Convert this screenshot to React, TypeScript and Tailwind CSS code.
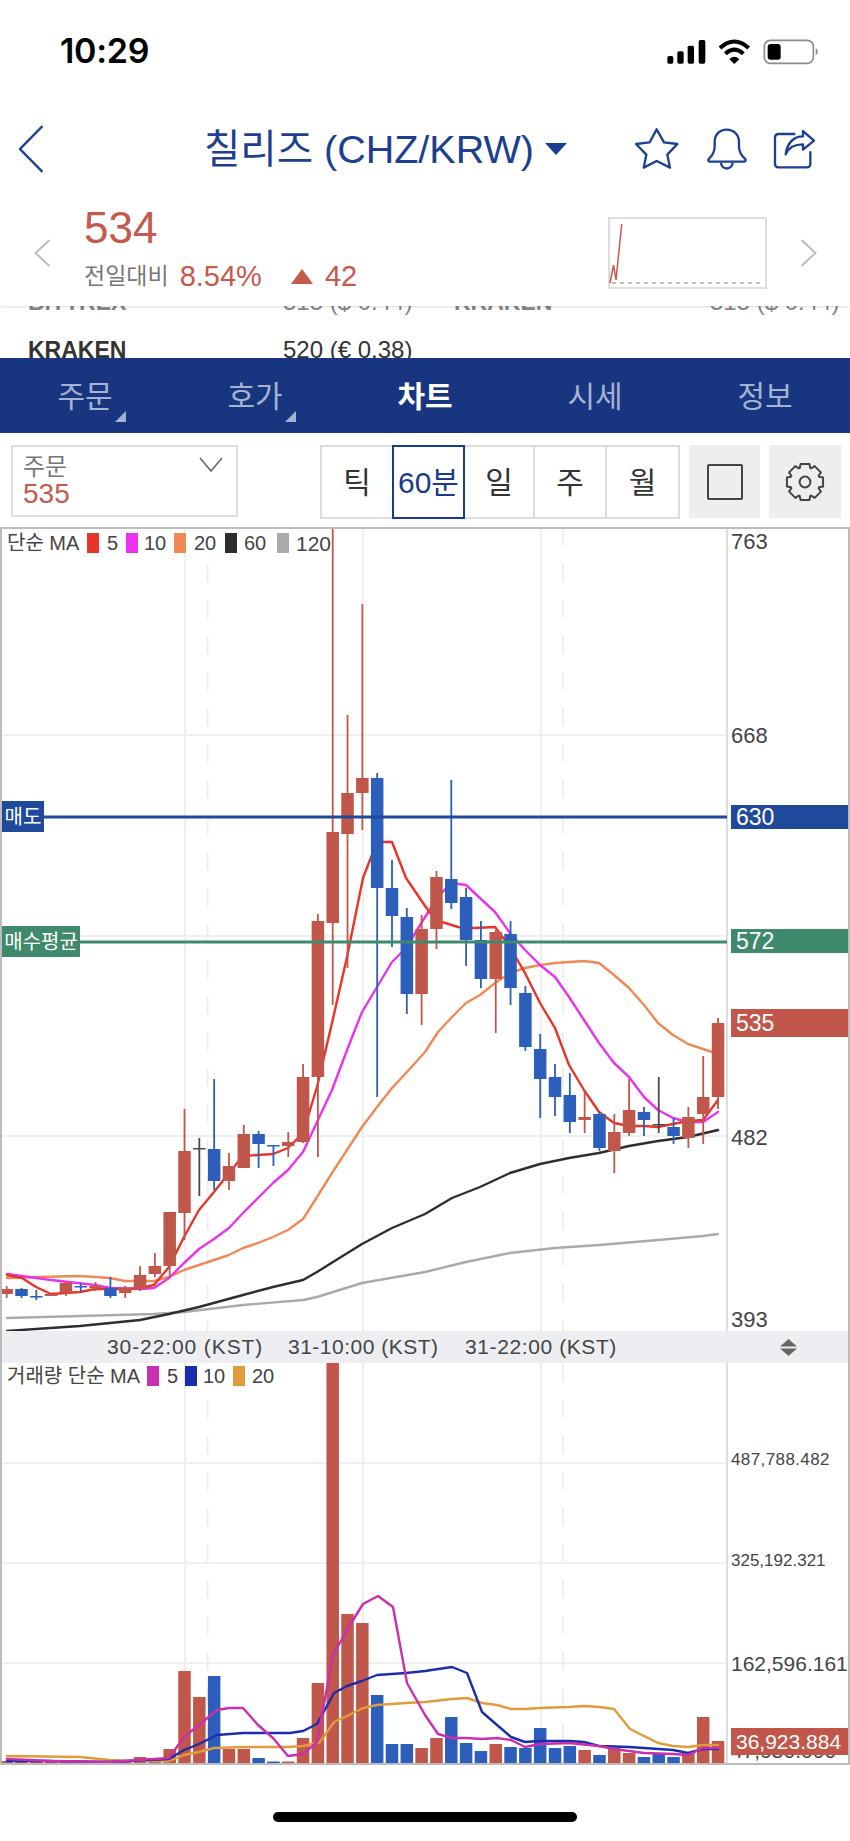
const FONT = "[font-family:'Liberation_Sans','Noto_Sans_CJK_KR',sans-serif]";

const RED = "#c1574a";
const BLUE = "#2c5fbb";
const DARK = "#4a4a4a";
const GRID = "#efefef";

const xAt = (i: number) => 6.67 + 14.82 * i;

// color, wick top, wick bottom, body top, body bottom
const candles: [string, number, number, number, number][] = [
  [RED, 1286, 1298, 1289, 1294],
  [BLUE, 1288, 1298, 1289, 1296],
  [BLUE, 1290, 1300, 1296, 1297.5],
  [RED, 1294, 1296, 1294, 1296],
  [RED, 1282, 1296, 1283, 1293],
  [BLUE, 1283, 1292, 1286, 1287.5],
  [RED, 1282, 1291, 1286, 1288],
  [BLUE, 1277, 1298, 1288, 1296],
  [RED, 1286, 1298, 1288, 1293],
  [RED, 1266, 1291, 1275, 1289],
  [RED, 1253, 1277, 1266, 1274],
  [RED, 1212, 1277, 1212, 1266],
  [RED, 1109, 1240, 1151, 1213],
  [DARK, 1138, 1196, 1148, 1149.5],
  [BLUE, 1079, 1190, 1149, 1181],
  [RED, 1153, 1190, 1166, 1181],
  [RED, 1125, 1168, 1134, 1168],
  [BLUE, 1131, 1168, 1134, 1144],
  [BLUE, 1145, 1166, 1145, 1146.5],
  [RED, 1132, 1157, 1142, 1146],
  [RED, 1064, 1143, 1077, 1142],
  [RED, 914, 1157, 921, 1077],
  [RED, 529, 1005, 832, 923],
  [RED, 715, 968, 793, 834],
  [RED, 604, 830, 778, 793],
  [BLUE, 773, 1097, 778, 888],
  [BLUE, 860, 947, 888, 916],
  [BLUE, 908, 1014, 917, 994],
  [RED, 915, 1025, 929, 994],
  [RED, 871, 949, 877, 929],
  [BLUE, 780, 909, 879, 903],
  [BLUE, 888, 966, 897, 940],
  [BLUE, 921, 988, 940, 979],
  [RED, 930, 1033, 932, 979],
  [BLUE, 921, 1005, 934, 988],
  [BLUE, 986, 1051, 993, 1047],
  [BLUE, 1034, 1118, 1049, 1079],
  [BLUE, 1064, 1116, 1077, 1097],
  [BLUE, 1073, 1133, 1095, 1122],
  [RED, 1090, 1133, 1117, 1120],
  [BLUE, 1112, 1151, 1114, 1148],
  [RED, 1114, 1173, 1132, 1151],
  [RED, 1079, 1136, 1110, 1133],
  [BLUE, 1107, 1136, 1112, 1120],
  [DARK, 1077, 1133, 1124, 1125.5],
  [BLUE, 1118, 1144, 1127, 1136],
  [RED, 1107, 1148, 1117, 1138],
  [RED, 1056, 1144, 1097, 1114],
  [RED, 1018, 1109, 1023, 1097],
];

const volumes: [string, number][] = [
  [RED, 1761], [RED, 1762], [RED, 1762], [RED, 1762], [RED, 1762], [RED, 1762], [RED, 1762], [BLUE, 1762], [RED, 1762],
  [RED, 1757], [RED, 1758], [RED, 1749], [RED, 1671], [RED, 1697], [BLUE, 1676], [RED, 1749], [RED, 1749], [BLUE, 1758],
  [BLUE, 1761.5], [RED, 1761.5], [RED, 1738], [RED, 1683], [RED, 1363], [RED, 1614], [RED, 1623], [BLUE, 1695], [BLUE, 1744],
  [BLUE, 1744], [RED, 1748], [RED, 1738], [BLUE, 1717], [BLUE, 1743], [BLUE, 1751], [RED, 1744], [BLUE, 1747], [BLUE, 1748],
  [BLUE, 1728], [BLUE, 1748], [BLUE, 1746], [RED, 1750], [BLUE, 1755], [RED, 1748], [RED, 1753], [BLUE, 1757], [BLUE, 1753],
  [BLUE, 1757], [RED, 1753], [RED, 1717], [RED, 1741],
];

const ma5 = "7,1275 22,1278 36,1287 51,1294 66,1293 80,1292 95,1289 110,1289 125,1289 140,1288 154,1285 169,1267 184,1237 199,1210 214,1192 229,1173 243,1156 258,1155 273,1154 288,1148 303,1133 317,1087 332,1023 347,957 363,878 377,842 392,842 406,878 423,903 430,913 442,922 458,927 475,928 495,927 510,947 525,973 540,1003 555,1028 569,1065 584,1090 599,1112 614,1123 629,1126 644,1126 658,1127 673,1124 688,1121 703,1120 718,1100";
const ma10 = "7,1274 51,1280 95,1285 110,1288 140,1289 154,1288 169,1278 184,1263 199,1249 214,1239 229,1228 243,1213 258,1198 273,1183 288,1170 303,1152 317,1122 332,1090 347,1050 362,1012 377,987 392,962 406,948 425,917 438,897 451,883 466,885 482,900 495,912 510,933 525,950 540,965 555,977 569,997 584,1020 599,1043 614,1063 629,1077 644,1097 658,1110 673,1118 688,1122 703,1122 718,1112";
const ma20 = "7,1278 36,1277 80,1276 110,1278 125,1281 140,1281 154,1281 169,1277 184,1270 199,1265 214,1260 229,1255 243,1248 258,1243 273,1237 288,1230 303,1219 317,1197 332,1173 347,1150 362,1127 377,1107 392,1088 406,1073 425,1052 438,1032 452,1017 466,1003 480,995 495,983 510,973 525,968 540,965 555,963 569,962 584,961 599,963 614,975 629,988 644,1005 658,1023 673,1035 688,1044 703,1049 712,1052";
const ma60 = "7,1331 80,1326 140,1320 169,1314 199,1307 243,1295 273,1287 303,1280 317,1272 333,1262 362,1244 392,1228 425,1214 452,1198 480,1187 510,1173 540,1164 569,1158 599,1153 629,1146 658,1141 688,1137 718,1130";
const ma120 = "7,1318 80,1316 154,1314 184,1312 243,1305 303,1300 317,1297 362,1283 425,1272 466,1262 510,1253 555,1248 599,1245 658,1240 703,1236 718,1234";

const vol5 = "7,1759 51,1761 110,1762 169,1758 184,1737 199,1725 217,1710 229,1708 243,1708 258,1725 273,1738 288,1756 303,1754 317,1742 333,1655 347,1630 363,1604 378,1596 393,1607 407,1683 425,1715 438,1734 452,1738 467,1738 482,1739 497,1738 511,1740 525,1747 540,1744 569,1743 599,1746 614,1749 644,1753 673,1754 688,1755 703,1748 718,1748";
const vol10 = "7,1761 51,1761 110,1762 169,1759 184,1750 199,1744 217,1735 243,1733 273,1733 290,1733 303,1731 317,1724 334,1693 347,1686 362,1681 377,1675 406,1673 425,1671 452,1667 467,1673 482,1712 497,1725 511,1737 525,1742 540,1741 569,1741 584,1742 599,1746 629,1747 644,1748 673,1750 688,1753 703,1749 718,1749";
const vol20 = "7,1756 80,1757 110,1760 140,1761 169,1761 184,1755 199,1752 214,1748 243,1747 288,1747 303,1746 320,1742 334,1722 347,1716 363,1708 377,1705 406,1703 425,1702 452,1699 467,1698 482,1703 497,1705 511,1709 525,1709 540,1708 569,1707 584,1706 599,1707 614,1709 630,1729 644,1736 658,1743 673,1746 688,1747 703,1745 718,1745";

const gearPath = () => {
  const pts: string[] = [];
  const cx = 20;
  const cy = 20;
  for (let t = 0; t < 8; t++) {
    const a = (t * Math.PI) / 4 - Math.PI / 2;
    [
      [15, -0.36],
      [18.6, -0.24],
      [18.6, 0.24],
      [15, 0.36],
    ].forEach(([r, d]) => {
      pts.push(`${(cx + r * Math.cos(a + d)).toFixed(2)},${(cy + r * Math.sin(a + d)).toFixed(2)}`);
    });
  }
  return `M${pts.join(" L")} Z`;
};

const Line = ({ points, color, width = 2.4 }: { points: string; color: string; width?: number }) => (
  <polyline points={points} fill="none" stroke={color} strokeWidth={width} strokeLinejoin="round" strokeLinecap="round" />
);

const StatusBar = () => (
  <div className="flex h-[104px] items-start justify-between pl-[60px] pr-[20px] pt-[30px]">
    <span className="mt-[1px] text-[34px] leading-[40px] font-semibold tracking-[-0.3px] text-black [font-family:Inter,sans-serif]">10:29</span>
    <svg viewBox="0 0 540 135" className="h-[45px] w-[180px]">
      <rect x="52" y="78" width="18" height="23" rx="5" fill="#000" />
      <rect x="82" y="64" width="19" height="37" rx="5" fill="#000" />
      <rect x="113" y="47" width="19" height="54" rx="5" fill="#000" />
      <rect x="146" y="30" width="20" height="71" rx="5" fill="#000" />
      <path d="M210 54 C238 28 268 28 296 54" fill="none" stroke="#000" strokeWidth="12" />
      <path d="M226 71 C244 55 262 55 280 71" fill="none" stroke="#000" strokeWidth="12" />
      <path d="M238 88 C248 78 258 78 268 88 L253 102 Z" fill="#000" />
      <rect x="343" y="31" width="147" height="69" rx="18" fill="none" stroke="#8c8c8c" strokeWidth="5" />
      <rect x="353" y="42" width="39" height="47" rx="9" fill="#000" />
      <path d="M497 55 C505 58 505 72 497 76 Z" fill="#8c8c8c" />
    </svg>
  </div>
);

const NavHeader = () => (
  <div className="flex h-[90px] items-center pl-[19px] text-[#1c3f92]">
    <svg viewBox="0 0 24 48" className="h-[48px] w-[24px]">
      <path d="M23.5 1 L1 24 L23.5 47" fill="none" stroke="currentColor" strokeWidth="2.4" />
    </svg>
    <span className="ml-[161px] mt-[2px] text-[39.5px] leading-none whitespace-nowrap">칠리즈 (CHZ/KRW)</span>
    <svg viewBox="0 0 22 12" className="ml-[11px] h-[12px] w-[22px]">
      <path d="M0 0 H22 L11 12 Z" fill="currentColor" />
    </svg>
    <svg viewBox="40 20 140 130" className="absolute left-[633px] top-[127px] h-[43.3px] w-[46.7px]" fill="none" stroke="currentColor" strokeWidth="7" strokeLinejoin="round">
      <path d="M111 27 L133 66 L173 71 L143 103 L151 142 L111 122 L72 142 L80 103 L49 71 L90 66 Z" />
    </svg>
    <svg viewBox="255 20 130 130" className="absolute left-[705px] top-[127px] h-[43.3px] w-[43.3px]" fill="none" stroke="currentColor" strokeWidth="7" strokeLinejoin="round">
      <path d="M268 124 H374 Q380 120 374 114 Q358 100 357 80 V65 C357 42 340 28 320 28 C300 28 284 42 284 65 V80 Q283 100 268 114 Q262 120 268 124 Z" />
      <path d="M303 127 A17 17 0 0 0 338 127" />
    </svg>
    <svg viewBox="455 25 135 125" className="absolute left-[772px] top-[128px] h-[41.7px] w-[45px]" fill="none" stroke="currentColor" strokeWidth="7" strokeLinejoin="round">
      <path d="M525 43 H475 Q464 43 464 54 V132 Q464 143 475 143 H559 Q570 143 570 132 V95" />
      <path d="M548 34 L581 63 L548 90 V74 C525 74 505 82 496 104 C500 70 520 50 548 50 Z" />
    </svg>
  </div>
);

const PriceRow = () => (
  <div className="relative z-10 flex h-[112px] items-start bg-white shadow-[0_1px_2px_rgba(0,0,0,0.15)]">
    <svg viewBox="0 0 16 28" className="ml-[34px] mt-[45px] h-[28px] w-[16px]">
      <path d="M15.5 1 L1.5 14 L15.5 27" fill="none" stroke="#bdbdbd" strokeWidth="2" />
    </svg>
    <div className="ml-[34px] flex flex-col">
      <span className="mt-[8px] text-[44px] leading-[52px] text-[#c4594c]">534</span>
      <div className="mt-[5px] flex items-center text-[29px] leading-[34px] text-[#c4594c]">
        <span className="text-[23px] text-[#777]">전일대비</span>
        <span className="ml-[11px]">8.54%</span>
        <svg viewBox="0 0 22 15" className="ml-[29px] h-[15px] w-[22px]">
          <path d="M11 0 L22 15 H0 Z" fill="#c4594c" />
        </svg>
        <span className="ml-[12px]">42</span>
      </div>
    </div>
    <svg viewBox="608 217 159 72" className="absolute left-[608px] top-[23px] h-[72px] w-[159px]">
      <rect x="609" y="218" width="157" height="70" fill="#fff" stroke="#ddd" strokeWidth="2" />
      <line x1="612" y1="283" x2="762" y2="283" stroke="#aaa" strokeWidth="1.5" strokeDasharray="4 4" />
      <polyline points="610,283 613.5,265 616,280 621.7,224" fill="none" stroke="#c4594c" strokeWidth="1.5" />
    </svg>
    <svg viewBox="0 0 16 28" className="absolute left-[801px] top-[45px] h-[28px] w-[16px]">
      <path d="M0.5 1 L14.5 14 L0.5 27" fill="none" stroke="#bdbdbd" strokeWidth="2" />
    </svg>
  </div>
);

const ExchangePeek = () => (
  <div className="h-[52px] overflow-hidden text-[23px] leading-[48px] text-[#333]">
    <div className="-mt-[28px] flex h-[48px] opacity-60">
      <span className="ml-[28px] w-[255px] font-bold">BITTREX</span>
      <span className="w-[171px] text-[24px]">515 ($ 0.44)</span>
      <span className="w-[256px] font-bold">KRAKEN</span>
      <span className="text-[24px]">515 ($ 0.44)</span>
    </div>
    <div className="flex h-[48px]">
      <span className="ml-[28px] w-[255px] font-bold">KRAKEN</span>
      <span className="text-[24px]">520 (€ 0.38)</span>
    </div>
  </div>
);

const Tab = ({ label, active, corner }: { label: string; active?: boolean; corner?: boolean }) => (
  <div className="relative flex w-[170px] items-center justify-center pt-[2px]">
    <span className={active ? "text-[30px] font-bold text-white" : "text-[30px] text-[#a5b3d3]"}>{label}</span>
    {corner && <span className="absolute left-[115px] top-[53px] h-0 w-0 border-b-[11px] border-l-[11px] border-b-[#a5b3d3] border-l-transparent" />}
  </div>
);

const Tabs = () => (
  <div className="flex h-[75px] bg-[#18367f]">
    <Tab label="주문" corner />
    <Tab label="호가" corner />
    <Tab label="차트" active />
    <Tab label="시세" />
    <Tab label="정보" />
  </div>
);

const Toolbar = () => (
  <div className="flex h-[94px] items-start pt-[12px]">
    <div className="ml-[11px] flex h-[72px] w-[227px] justify-between border-2 border-[#ddd] pl-[10px] pr-[13px] pt-[8px]">
      <div className="flex flex-col">
        <span className="text-[24px] leading-[24px] text-[#777]">주문</span>
        <span className="text-[28px] leading-[30px] text-[#c4594c]">535</span>
      </div>
      <svg viewBox="0 0 24 15" className="mt-[2px] h-[15px] w-[24px]">
        <path d="M1 1 L12 14 L23 1" fill="none" stroke="#666" strokeWidth="1.6" />
      </svg>
    </div>
    <div className="ml-[82px] flex h-[74px] w-[360px] border-2 border-[#ddd] text-[30px] text-[#333]">
      <div className="flex w-[70px] items-center justify-center">틱</div>
      <div className="-my-[2px] flex w-[73px] items-center justify-center border-2 border-[#1b3a8a] whitespace-nowrap text-[#1b3a8a]">60분</div>
      <div className="flex w-[70px] items-center justify-center border-r-2 border-[#ddd]">일</div>
      <div className="flex w-[72px] items-center justify-center border-r-2 border-[#ddd]">주</div>
      <div className="flex w-[71px] items-center justify-center">월</div>
    </div>
    <div className="ml-[9px] flex h-[73px] w-[71px] items-center justify-center bg-[#eee]">
      <div className="h-[36px] w-[36px] rounded-[2px] border-[2.5px] border-[#444]" />
    </div>
    <div className="ml-[9px] flex h-[73px] w-[72px] items-center justify-center bg-[#eee]">
      <svg viewBox="0 0 40 40" className="h-[40px] w-[40px]" fill="none" stroke="#444" strokeWidth="2" strokeLinejoin="round">
        <path d={gearPath()} />
        <circle cx="20" cy="20" r="5.4" />
      </svg>
    </div>
  </div>
);

const Swatch = ({ className }: { className: string }) => <span className={`h-[20px] w-[12px] ${className}`} />;

const PricePanel = () => (
  <div className="relative h-[802px]">
    <svg viewBox="2 529 846 802" className="absolute left-0 top-0 h-[802px] w-[846px]">
      {[735, 936, 1136].map((y) => (
        <line key={y} x1="2" y1={y} x2="727" y2={y} stroke={GRID} strokeWidth="2" />
      ))}
      {[185, 363, 541].map((x) => (
        <line key={x} x1={x} y1="529" x2={x} y2="1331" stroke={GRID} strokeWidth="2" />
      ))}
      <line x1="207.5" y1="564" x2="207.5" y2="1331" stroke={GRID} strokeWidth="2" strokeDasharray="18 18" />
      <line x1="563" y1="528" x2="563" y2="1331" stroke={GRID} strokeWidth="2" strokeDasharray="18 18" />
      <line x1="727" y1="529" x2="727" y2="1331" stroke="#ddd" strokeWidth="2" />
      <Line points={ma120} color="#aaaaaa" />
      <Line points={ma60} color="#2e2e2e" />
      <Line points={ma20} color="#ef8a55" />
      <Line points={ma10} color="#e933ee" />
      <Line points={ma5} color="#e8352a" />
      {candles.map(([color, wt, wb, bt, bb], i) => (
        <g key={i} fill={color}>
          <rect x={xAt(i) - 0.9} y={wt} width="1.8" height={wb - wt} />
          <rect x={xAt(i) - 6.25} y={bt} width="12.5" height={bb - bt} />
        </g>
      ))}
      <line x1="2" y1="817" x2="727" y2="817" stroke="#1f4a9c" strokeWidth="3" />
      <line x1="2" y1="942" x2="727" y2="942" stroke="#3f8a6c" strokeWidth="3" />
    </svg>

    <div className="absolute left-[5px] top-[4px] flex h-[20px] items-center text-[20px] leading-none text-[#444]">
      <span className="w-[80px] text-[20px] whitespace-nowrap">단순 MA</span>
      <Swatch className="bg-[#e8352a]" />
      <span className="ml-[8px] w-[19px]">5</span>
      <Swatch className="bg-[#e933ee]" />
      <span className="ml-[6px] w-[30px]">10</span>
      <Swatch className="bg-[#ef8a55]" />
      <span className="ml-[8px] w-[31px]">20</span>
      <Swatch className="bg-[#2e2e2e]" />
      <span className="ml-[7px] w-[33px]">60</span>
      <Swatch className="bg-[#aaaaaa]" />
      <span className="ml-[7px] text-[21px]">120</span>
    </div>

    <span className="absolute left-[729px] top-[13px] -translate-y-1/2 text-[22px] leading-none text-[#444]">763</span>
    <span className="absolute left-[729px] top-[207px] -translate-y-1/2 text-[22px] leading-none text-[#444]">668</span>
    <span className="absolute left-[729px] top-[609px] -translate-y-1/2 text-[22px] leading-none text-[#444]">482</span>
    <span className="absolute left-[729px] top-[791px] -translate-y-1/2 text-[22px] leading-none text-[#444]">393</span>

    <div className="absolute left-0 top-[272px] flex h-[31px] w-[42px] items-center justify-center bg-[#1f4a9c] text-[20px] text-white">매도</div>
    <div className="absolute left-0 top-[397px] flex h-[31px] w-[78px] items-center justify-center bg-[#3f8a6c] text-[20px] whitespace-nowrap text-white">매수평균</div>

    <div className="absolute left-[729px] top-[276px] flex h-[24px] w-[117px] items-center bg-[#1f4a9c] pl-[5px] text-[23px] text-white">630</div>
    <div className="absolute left-[729px] top-[400px] flex h-[24px] w-[117px] items-center bg-[#3f8a6c] pl-[5px] text-[23px] text-white">572</div>
    <div className="absolute left-[729px] top-[480px] flex h-[28px] w-[117px] items-center bg-[#c1574a] pl-[5px] text-[23px] text-white">535</div>
  </div>
);

const TimeBar = () => (
  <div className="flex h-[32px] items-center bg-[#eceef2] text-[21px] tracking-[0.6px] whitespace-nowrap text-[#444]">
    <span className="ml-[105px] w-[181px] tracking-[0.9px]">30-22:00 (KST)</span>
    <span className="w-[177px] tracking-[0.5px]">31-10:00 (KST)</span>
    <span className="w-[315px]">31-22:00 (KST)</span>
    <svg viewBox="0 0 17 17" className="h-[17px] w-[17px]" fill="#666">
      <path d="M8.5 0 L17 7.5 H0 Z" />
      <path d="M0 9.5 H17 L8.5 17 Z" />
    </svg>
  </div>
);

const VolumePanel = () => (
  <div className="relative h-[400px]">
    <svg viewBox="2 1363 846 400" className="absolute left-0 top-0 h-[400px] w-[846px]">
      {[1463, 1563, 1663].map((y) => (
        <line key={y} x1="2" y1={y} x2="727" y2={y} stroke={GRID} strokeWidth="2" />
      ))}
      {[185, 363, 541].map((x) => (
        <line key={x} x1={x} y1="1363" x2={x} y2="1763" stroke={GRID} strokeWidth="2" />
      ))}
      <line x1="207.5" y1="1400" x2="207.5" y2="1763" stroke={GRID} strokeWidth="2" strokeDasharray="18 18" />
      <line x1="563" y1="1364" x2="563" y2="1763" stroke={GRID} strokeWidth="2" strokeDasharray="18 18" />
      <line x1="727" y1="1363" x2="727" y2="1763" stroke="#ddd" strokeWidth="2" />
      {volumes.map(([color, top], i) => (
        <rect key={i} x={xAt(i) - 6.25} y={top} width="12.5" height={1763 - top} fill={color} />
      ))}
      <Line points={vol20} color="#e09c3a" />
      <Line points={vol10} color="#1a2dae" />
      <Line points={vol5} color="#c92fae" />
    </svg>

    <div className="absolute left-[5px] top-[3px] flex h-[20px] items-center text-[20px] leading-none text-[#444]">
      <span className="w-[140px] text-[20px] whitespace-nowrap">거래량 단순 MA</span>
      <Swatch className="bg-[#c92fae]" />
      <span className="ml-[8px] w-[18px]">5</span>
      <Swatch className="bg-[#1a2dae]" />
      <span className="ml-[6px] w-[30px]">10</span>
      <Swatch className="bg-[#e09c3a]" />
      <span className="ml-[7px]">20</span>
    </div>

    <span className="absolute left-[729px] top-[96px] -translate-y-1/2 text-[17px] leading-none tracking-[0.4px] text-[#444]">487,788.482</span>
    <span className="absolute left-[729px] top-[197px] -translate-y-1/2 text-[17px] leading-none text-[#444]">325,192.321</span>
    <span className="absolute left-[729px] top-[300px] -translate-y-1/2 text-[21px] leading-none text-[#444]">162,596.161</span>
    <span className="absolute left-[729px] top-[387px] -translate-y-1/2 text-[21px] leading-none text-[#444]">47,950.000</span>
    <div className="absolute left-[729px] top-[365px] flex h-[27px] w-[117px] items-center bg-[#c1574a] pl-[5px] text-[21px] text-white">36,923.884</div>
  </div>
);

export default function App() {
  return (
    <div className={`relative h-[1841px] w-[850px] overflow-hidden bg-white ${FONT}`}>
      <StatusBar />
      <NavHeader />
      <PriceRow />
      <ExchangePeek />
      <Tabs />
      <Toolbar />
      <div className="border-x-2 border-y-2 border-[#bcbcbc]">
        <PricePanel />
        <TimeBar />
        <VolumePanel />
      </div>
      <div className="mx-auto mt-[47px] h-[10px] w-[304px] rounded-full bg-black" />
    </div>
  );
}
